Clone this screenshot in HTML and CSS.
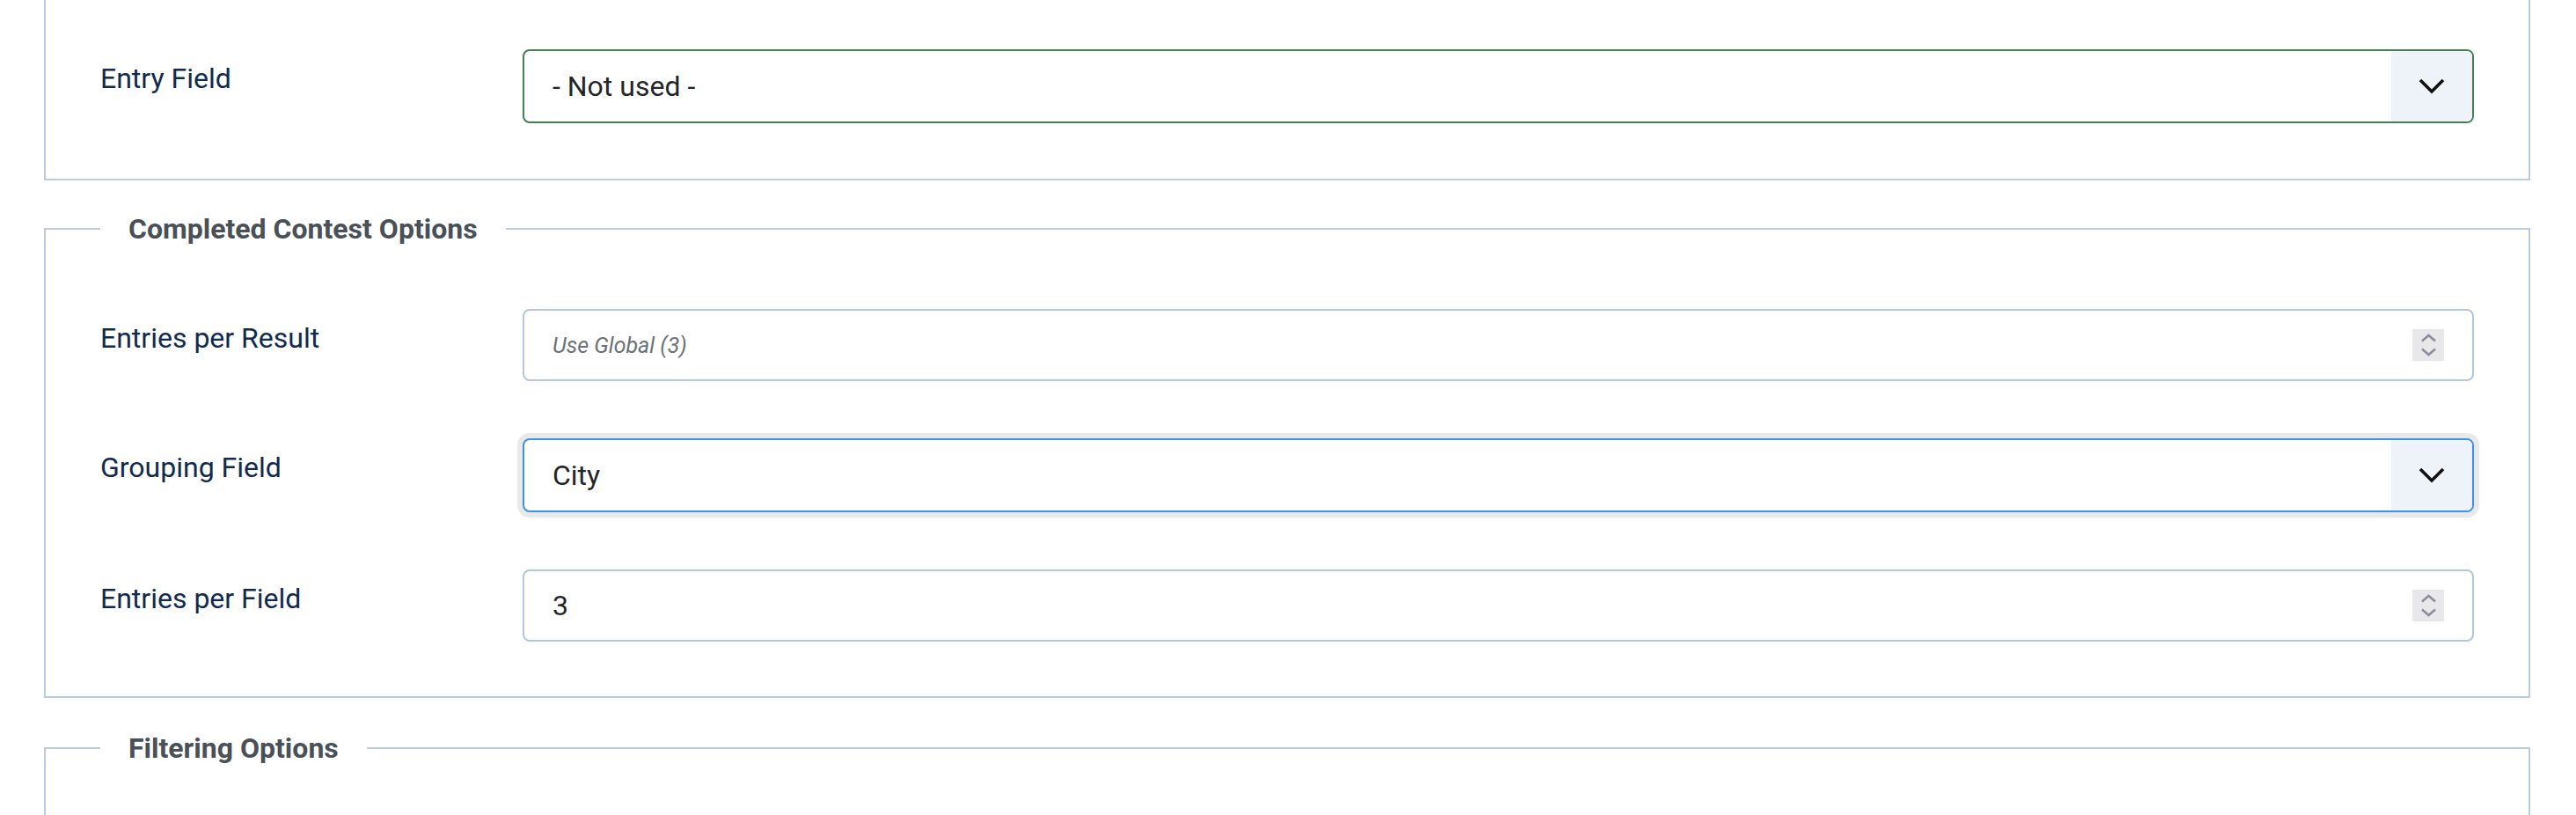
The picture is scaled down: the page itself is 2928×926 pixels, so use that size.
FILE: index.html
```html
<!DOCTYPE html>
<html lang="en">
<head>
<meta charset="utf-8">
<title>Contest Options</title>
<link rel="stylesheet" href="styles.css">
</head>
<body>
<main class="page">
  <fieldset class="group group--cut">
    <div class="row">
      <label class="label">Entry Field</label>
      <div class="control select select--valid">
        <span class="value">- Not used -</span>
        <span class="caret"><svg width="30" height="18" viewBox="0 0 30 18"><polyline points="2,2 15,15 28,2" fill="none" stroke="#111" stroke-width="3.6"/></svg></span>
      </div>
    </div>
  </fieldset>

  <fieldset class="group group--mid">
    <legend class="legend">Completed Contest Options</legend>
    <div class="row">
      <label class="label">Entries per Result</label>
      <div class="control number">
        <span class="placeholder">Use Global (3)</span>
        <span class="spin"><svg width="36" height="36" viewBox="0 0 36 36"><polyline points="11,13.5 18.5,7 26,13.5" fill="none" stroke="#8d8b9b" stroke-width="2.6"/><polyline points="11,22.5 18.5,29 26,22.5" fill="none" stroke="#8d8b9b" stroke-width="2.6"/></svg></span>
      </div>
    </div>
    <div class="row">
      <label class="label">Grouping Field</label>
      <div class="control select select--focus">
        <span class="value">City</span>
        <span class="caret"><svg width="30" height="18" viewBox="0 0 30 18"><polyline points="2,2 15,15 28,2" fill="none" stroke="#111" stroke-width="3.6"/></svg></span>
      </div>
    </div>
    <div class="row">
      <label class="label">Entries per Field</label>
      <div class="control number">
        <span class="value">3</span>
        <span class="spin"><svg width="36" height="36" viewBox="0 0 36 36"><polyline points="11,13.5 18.5,7 26,13.5" fill="none" stroke="#8d8b9b" stroke-width="2.6"/><polyline points="11,22.5 18.5,29 26,22.5" fill="none" stroke="#8d8b9b" stroke-width="2.6"/></svg></span>
      </div>
    </div>
  </fieldset>

  <fieldset class="group group--tail">
    <legend class="legend">Filtering Options</legend>
  </fieldset>
</main>
</body>
</html>
```

FILE: styles.css
```css
html, body {
  margin: 0;
  background: #ffffff;
}

body {
  font-family: Roboto, "Liberation Sans", Arial, sans-serif;
  overflow: hidden;
}

.page {
  padding: 0 52px 0 50px;
}

.group {
  margin: 0 0 33px;
  padding: 67px 62px 63px;
  border: 2px solid #bccae2;
  min-width: 0;
}

.group--cut {
  border-top: 0;
  padding-top: 56px;
  margin-bottom: 31px;
}

.group--mid {
  padding-bottom: 62px;
}

.group--tail {
  padding-bottom: 200px;
}

.legend {
  padding: 0 32px;
  font-size: 32px;
  line-height: 48px;
  font-weight: 700;
  color: #495057;
}

.row {
  display: flex;
  align-items: flex-start;
}

.row + .row {
  margin-top: 65px;
}

.label {
  flex: none;
  width: 480px;
  padding-top: 9px;
  font-size: 32px;
  line-height: 48px;
  color: #112a4f;
}

.control {
  flex: 1;
  box-sizing: border-box;
  height: 82px;
  display: flex;
  align-items: center;
  padding-left: 32px;
  border: 2px solid #b7c5dd;
  border-radius: 8px;
  background: #ffffff;
  font-size: 32px;
  color: #22262a;
}

.select {
  height: 84px;
}

.select--valid {
  border-color: #467e55;
}

.select--focus {
  border-color: #3b90f0;
  box-shadow: 0 0 0 6px #e9e9ea;
}

.caret {
  margin-left: auto;
  align-self: stretch;
  width: 92px;
  display: flex;
  align-items: center;
  justify-content: center;
  background: #eef3fa;
  border-radius: 0 6px 6px 0;
}

.caret svg {
  display: block;
}

.placeholder {
  font-size: 25px;
  font-style: italic;
  color: #6b7178;
}

.spin {
  margin-left: auto;
  margin-right: 32px;
  width: 36px;
  height: 36px;
  background: #e8e8eb;
}

.spin svg {
  display: block;
}
```
